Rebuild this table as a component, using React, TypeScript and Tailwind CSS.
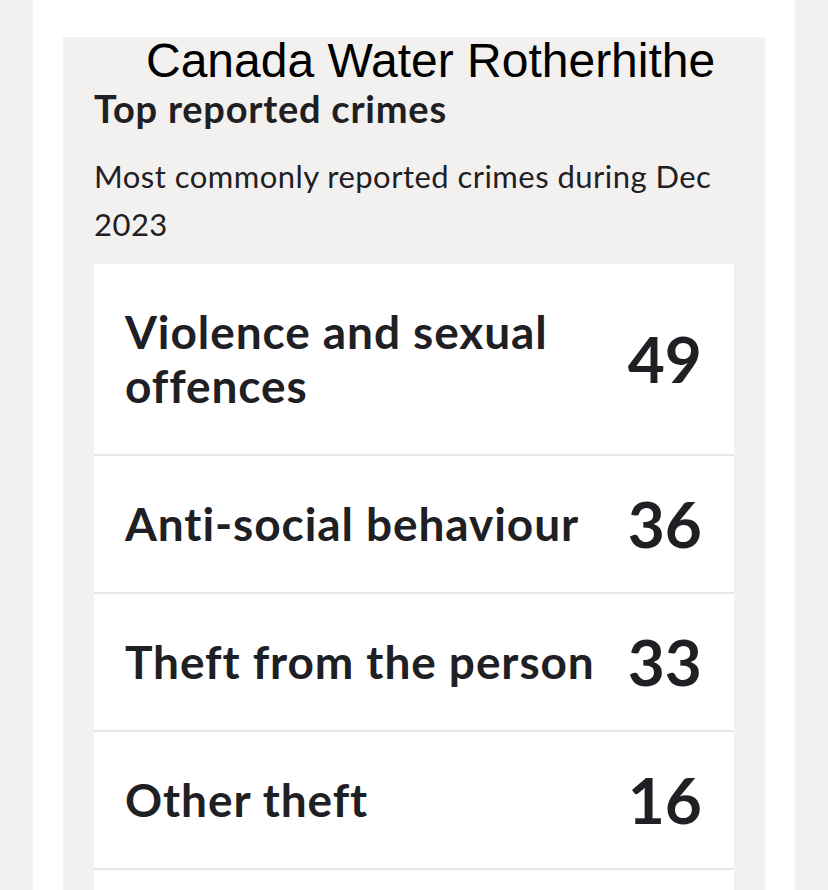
const crimes = [
  { label: 'Violence and sexual offences', count: 49 },
  { label: 'Anti-social behaviour', count: 36 },
  { label: 'Theft from the person', count: 33 },
  { label: 'Other theft', count: 16 },
]

export default function App() {
  return (
    <main className="min-h-screen bg-[#f2f1f0] pl-[33px] pr-[33px]">
      <div className="min-h-screen bg-white px-[30px] pt-[37px]">
        <section className="bg-[#f2f1f0] px-[31px] pb-10 text-[#1f2024] font-['Lato',sans-serif]">
          <h2 className="pl-[52px] text-[48px] leading-none text-black font-['Liberation_Sans',Arial,sans-serif]">
            Canada Water Rotherhithe
          </h2>

          <h3 className="mt-px text-[38px] leading-[1.2] tracking-[0.02em] font-bold">
            Top reported crimes
          </h3>

          <p className="mt-[20px] pr-4 text-[31px] leading-[48px] tracking-[0.015em]">
            Most commonly reported crimes during Dec 2023
          </p>

          <ul className="mt-4 bg-white pb-[60px]">
            {crimes.map(({ label, count }) => {
              return (
                <li
                  key={label}
                  className="flex items-center justify-between gap-6 border-b-2 border-[#e9e7e6] py-[41px] pl-[31px] pr-[32px]"
                >
                  <span className="text-[46px] leading-[54px] tracking-[0.02em] font-bold">
                    {label}
                  </span>
                  <span className="text-[64px] leading-[54px] font-bold">
                    {count}
                  </span>
                </li>
              )
            })}
          </ul>
        </section>
      </div>
    </main>
  )
}
